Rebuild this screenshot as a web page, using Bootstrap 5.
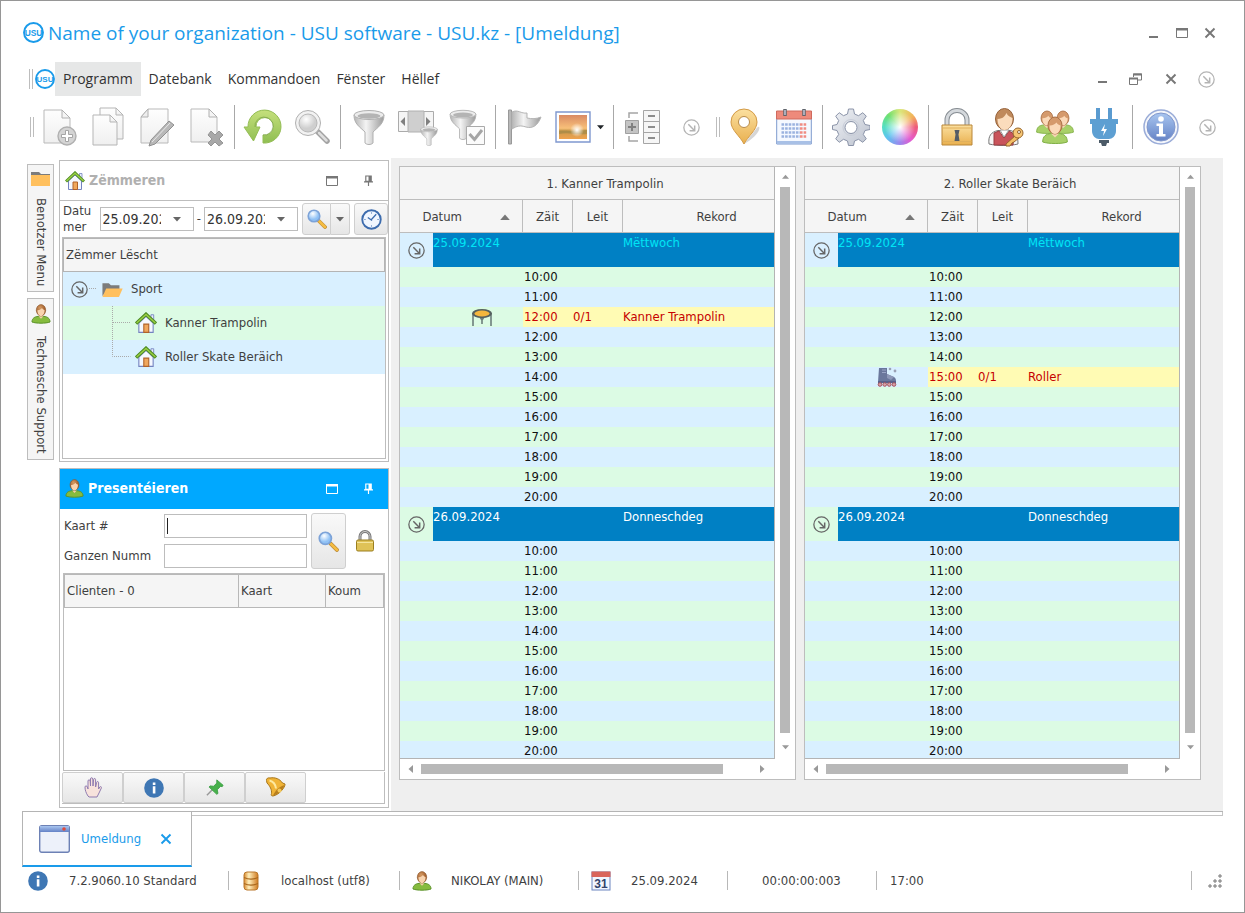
<!DOCTYPE html>
<html lang="lb">
<head>
<meta charset="utf-8">
<meta name="viewport" content="width=device-width, initial-scale=1">
<title>USU software - Umeldung</title>
<link href="https://cdn.jsdelivr.net/npm/bootstrap@5.3.0/dist/css/bootstrap.min.css" rel="stylesheet">
<style>
:root{--line:#bdbdbd;--blue:#00a8ff;--ink:#3f3f3f;--rowb:#d9f0ff;--rowg:#dcfbe4}
body{font-family:"DejaVu Sans Condensed","Open Sans",sans-serif;font-size:13px;line-height:20px;color:var(--ink);background:#fff}
button{font:inherit;color:inherit}
svg{display:block;flex:none}
.app{border:1px solid #969696;min-height:100vh}
.plain{background:none;border:0;padding:0;display:flex;align-items:center;justify-content:center;color:#666}
.titlebar{height:61px;padding:2px 20px 0 22px}
.titlebar h1{font-family:"Open Sans","Noto Sans",sans-serif;font-size:19px;line-height:28px;color:#1a9bea;font-weight:400}
.win{width:28px;height:28px;color:#777}
.menubar{height:34px;padding:0 21px 0 28px;font-family:"Open Sans","Noto Sans",sans-serif;font-size:14px}
.menubar .menu-item{color:#333;text-decoration:none;padding:7px 8px;line-height:20px}
.menubar .menu-item.active{background:#e6e7e7}
.grip{width:4px;height:20px;border:solid #bdbdbd;border-width:0 1px;flex:none}
.menubar .grip{margin-right:2px}
.toolbar{height:62px;padding:0 24px 0 29px}
.tool{width:49px;height:44px}
.vsep{width:1px;height:44px;background:#a8a8a8;margin:0 3px 0 4px;flex:none}
.more{width:26px;height:26px;color:#b4b4b4}
.more.mid{margin:0 12px}
.main{padding:0 21px}
.side{width:37px;padding:6px 5px 0;gap:6px}
.side button{width:27px;border:1px solid var(--line);background:#f5f5f5;padding:5px 2px;display:flex;flex-direction:column;align-items:center;gap:12px}
.side span{writing-mode:vertical-rl;line-height:20px;white-space:nowrap}
.dock{width:330px;gap:6px;padding:2px 0 3px}
.panel{border:1px solid var(--line);background:#fff}
.panel-head{height:40px;padding:0 2px 0 5px;border-bottom:1px solid var(--line);color:#b0b0b0}
.panel-head h2{font-family:"DejaVu Sans Condensed","DejaVu Sans",sans-serif;font-size:14px;font-weight:700}
.panel-head .plain{width:36px;height:28px;color:#777}
.panel-head.on{background:var(--blue);border-color:var(--blue);color:#fff}
.panel-head.on .plain{color:#fff}
.entry{grid-template-columns:100px 143px;row-gap:6px}
.entry label{line-height:24px}
.field{border:1px solid var(--line);height:24px;min-width:0;color:#222;background:#fff;border-radius:0;padding:0 4px;outline:0}
.field.caret{background:linear-gradient(#222,#222) 2px 3px/1px 16px no-repeat #fff}
.datebox{width:94px;border:1px solid var(--line);height:24px}
.datebox input{border:0;width:60px;padding:0 0 0 2px;font-size:14px;color:#333;outline:0}
.datebox button{width:32px}
.soft{border:1px solid #cfcfcf;border-radius:3px;background:linear-gradient(#f9f9f9,#e6e6e6);padding:0;display:flex;align-items:center;justify-content:center;color:#666}
.filter{height:36px;padding:0 0 0 3px}
.filter label{width:42px;line-height:16px}
.filter .dash{width:12px;text-align:center}
.treebox{border:1px solid var(--line);margin:0 2px 2px;min-height:222px}
.listhead{background:#f5f5f5;border:1px solid #b4b4b4;line-height:32px;padding:0 2px}
.tree li{height:34px}
.tree li:nth-child(odd){background:var(--rowb)}
.tree li:nth-child(even){background:var(--rowg)}
.inset{margin:0 3px;border:1px solid var(--line)}
.clients th{background:#f5f5f5;border:1px solid #b8b8b8;font-weight:400;line-height:32px;padding:0 2px}
.clients{table-layout:fixed;width:100%}
.cmds{margin:1px 3px 3px 2px;border:solid var(--line);border-width:0 1px 1px 0}
.cmd{width:61px;height:31px;border-radius:2px}
.work{background:#efefef;margin-left:2px;padding:8px 22px 30px 8px;gap:8px}
.frame{flex:1 1 0;min-width:0;border:1px solid var(--line);background:#fff}
.view{height:592px;min-width:0;overflow:hidden;border-right:1px solid #b4b4b4;border-bottom:1px solid #b4b4b4}
.sched{table-layout:fixed;width:100%;border-collapse:separate;border-spacing:0;color:#111}
.sched th{background:#f5f5f5;color:var(--ink);font-weight:400;height:33px;padding:1px 0 0;text-align:center;border:solid #bdbdbd;border-width:0 1px 1px 0}
.sched th:last-child{border-right:0}
.sched .wide{padding-left:36px}
.sched .sort{margin-left:22px;color:#777}
.sched td{height:20px;line-height:20px;padding:0}
.sched tbody tr:nth-child(odd){background:var(--rowb)}
.sched tbody tr:nth-child(even){background:var(--rowg)}
.sched td:nth-child(3){padding-left:1px}
.sched tr.day td{height:34px;vertical-align:top;background:#0080c4;color:#fff;padding:0}
.sched tr.day.now td{color:#00e5f5}
.sched tr.day td.tog{background:inherit;vertical-align:middle}
.sched tr.booked td.hit{background:#fffbb4;color:#c60000}
.vbar{width:20px;flex:none;padding:7px 0 9px;color:#999}
.vbar i,.hbar i{background:#b8b8b8}
.vbar i{width:10px;margin-bottom:4px}
.hbar{height:20px;padding:0 30px 0 8px;color:#999}
.hbar i{height:10px;flex:0 1 302px}
.foot{margin:0 21px;border-top:1px solid #b4b4b4}
.rail{border:solid #c4c4c4;border-width:0 1px 1px 0;height:4px;flex:1}
.doc{width:170px;height:55px;border:solid #b4b4b4;border-width:0 1px 0 1px;border-bottom:2px solid #1a9bea;color:#1a9bea;padding-left:16px;gap:11px}
.doc .plain{color:#1a9bea}
.status{height:45px;padding:0 22px 18px 27px}
.status .vs{width:1px;height:19px;background:#b8b8b8}
</style>
</head>
<body>
<svg width="0" height="0" class="position-absolute" aria-hidden="true">
<defs>
<linearGradient id="gMetal" x1="0" x2="1"><stop offset="0" stop-color="#b5b5b5"/><stop offset=".4" stop-color="#f4f4f4"/><stop offset="1" stop-color="#9a9a9a"/></linearGradient>
<linearGradient id="gPage" x2="0" y2="1"><stop offset="0" stop-color="#fefefe"/><stop offset="1" stop-color="#efefef"/></linearGradient>
<linearGradient id="gGreen" x2="0" y2="1"><stop offset="0" stop-color="#c5e07c"/><stop offset="1" stop-color="#8fbe52"/></linearGradient>
<linearGradient id="gGold" x2="0" y2="1"><stop offset="0" stop-color="#fbe0a0"/><stop offset="1" stop-color="#e9b04f"/></linearGradient>
<linearGradient id="gDb" x2="1"><stop offset="0" stop-color="#d98a2e"/><stop offset=".35" stop-color="#fff0bd"/><stop offset="1" stop-color="#d07a1f"/></linearGradient>
<linearGradient id="gSun" x2="0" y2="1"><stop offset="0" stop-color="#d98a64"/><stop offset=".55" stop-color="#f8c079"/><stop offset=".65" stop-color="#c99a4e"/><stop offset="1" stop-color="#efa24e"/></linearGradient>
<linearGradient id="gBlue" x2="0" y2="1"><stop offset="0" stop-color="#a9c6f0"/><stop offset="1" stop-color="#6482c6"/></linearGradient>
<linearGradient id="gGear" x2="1" y2="1"><stop offset="0" stop-color="#f0f2f6"/><stop offset="1" stop-color="#bcc2ce"/></linearGradient>
<radialGradient id="gLens" cx=".4" cy=".3"><stop offset="0" stop-color="#fff"/><stop offset="1" stop-color="#cfcfcf"/></radialGradient>
<radialGradient id="gLensB" cx=".4" cy=".3"><stop offset="0" stop-color="#fff"/><stop offset="1" stop-color="#8fc1f5"/></radialGradient>
<radialGradient id="gHair" cx=".4" cy=".3"><stop offset="0" stop-color="#d59a63"/><stop offset="1" stop-color="#a5622f"/></radialGradient>
<radialGradient id="gGlow"><stop offset="0" stop-color="#fff"/><stop offset="1" stop-color="#fff" stop-opacity="0"/></radialGradient>
</defs>
<symbol id="sheet" viewBox="0 0 36 36"><path d="M3 2h18l8 8v25H3z" fill="url(#gPage)" stroke="#b9b9b9"/><path d="M21 2v8h8z" fill="#f5f5f5" stroke="#b0b0b0"/></symbol>
<symbol id="more" viewBox="0 0 16 16"><circle cx="8" cy="8" r="7.2" fill="none" stroke="currentColor" stroke-width="1.2"/><path d="M5 5l5.500 5.500M11 6.200V11H6.200" fill="none" stroke="currentColor" stroke-width="1.400"/></symbol>
<symbol id="funnel" viewBox="0 0 32 36"><path d="M1 6c0 9 6 12 11 17v11c2 2 6 2 8 0V23c5-5 11-8 11-17z" fill="url(#gMetal)" stroke="#b0b0b0"/><ellipse cx="16" cy="6" rx="15" ry="4.500" fill="#ececec" stroke="#b0b0b0"/><ellipse cx="16" cy="7" rx="11.500" ry="2.800" fill="#b4b4b4"/></symbol>
<symbol id="glassB" viewBox="0 0 20 20"><path d="M12 12l6 6" stroke="#b98a3a" stroke-width="3.800" stroke-linecap="round"/><path d="M12.500 12.500L18 18" stroke="#f5bc42" stroke-width="2.600" stroke-linecap="round"/><circle cx="7" cy="7" r="5.800" fill="url(#gLensB)" stroke="#7da3d8" stroke-width="1.600"/></symbol>
<symbol id="house" viewBox="0 0 20 20"><path d="M14.500 2.500h2.500v5h-2.500z" fill="#e9eefb" stroke="#7483c0" stroke-width=".8"/><path d="M3.500 10L10 4l6.500 6v8.500h-13z" fill="#f5f8ff" stroke="#7483c0"/><path d="M1 10.500L10 2l9 8.500" fill="none" stroke="#4c8a21" stroke-width="3"/><path d="M1.500 10L10 2.200l8.500 7.800" fill="none" stroke="#9bcf46" stroke-width="1.300"/><path d="M8 11h4.500v7.500H8z" fill="#f0a75d" stroke="#b0622a"/></symbol>
<symbol id="person" viewBox="0 0 20 20"><path d="M1 18c0-4 3-5.300 6-5.600h6c3 .3 6 1.600 6 5.600-4 1.600-14 1.600-18 0z" fill="#86bb3e" stroke="#5b9228"/><path d="M7.500 12.200l2.500 2.500 2.500-2.500z" fill="#f3cda6"/><ellipse cx="10" cy="6.200" rx="4.700" ry="5.600" fill="url(#gHair)" stroke="#8a5226" stroke-width=".6"/><path d="M6.400 6.200c2 .2 3.600-1 4.600-2.200.6 1.200 1.500 1.600 2.600 2 0 3.600-1.700 6-3.600 6s-3.600-2.400-3.600-5.800z" fill="#f8d3ae"/></symbol>
<symbol id="member" viewBox="0 0 26 28"><path d="M.7 26c0-6 3.500-8 8-8.500h8.600c4.500.5 8 2.500 8 8.500-5 2-19 2-24.600 0z" fill="#a8d068" stroke="#7fae45"/><path d="M9 17.500l4 4 4-4z" fill="#f6d5b3"/><ellipse cx="13" cy="9.500" rx="7" ry="8.500" fill="#d59a6c" stroke="#a86d42"/><path d="M7.500 9.500c3 .2 6-1.500 7-3 1 1.800 2.500 2.500 4 3 0 5-2.500 8.500-5.500 8.500s-5.500-3.500-5.500-8.500z" fill="#fbd9b8"/></symbol>
<symbol id="info" viewBox="0 0 20 20"><circle cx="10" cy="10" r="9.800" fill="#3f77b4"/><path d="M8.800 4.500h2.600v2.400H8.800zM8.800 8.300h2.600v7.200H8.800z" fill="#fff"/></symbol>
<symbol id="folder" viewBox="0 0 20 16"><path d="M1 14V2h6l2 2h8v4H6z" fill="#7c7c7c"/><path d="M4.500 7H20l-3.500 8H1z" fill="#ffc05e"/></symbol>
<symbol id="box" viewBox="0 0 12 10"><path d="M.5.500h11v9H.5z" fill="none" stroke="currentColor"/><path d="M0 0h12v2.500H0z" fill="currentColor"/></symbol>
<symbol id="tack" viewBox="0 0 10 12"><path d="M2 1h6v6H2zM0 7.500h10M5 7v5" fill="none" stroke="currentColor" stroke-width="1.300"/><path d="M5 1h3v6H5z" fill="currentColor"/></symbol>
<symbol id="cross" viewBox="0 0 12 12"><path d="M1.500 1.500l9 9M10.500 1.500l-9 9" stroke="currentColor" stroke-width="1.900"/></symbol>
<symbol id="down" viewBox="0 0 8 5"><path d="M0 0h8L4 4.500z" fill="currentColor"/></symbol>
<symbol id="up" viewBox="0 0 8 5"><path d="M0 5h8L4 .5z" fill="currentColor"/></symbol>
<symbol id="left" viewBox="0 0 5 8"><path d="M5 0v8L.5 4z" fill="currentColor"/></symbol>
<symbol id="right" viewBox="0 0 5 8"><path d="M0 0v8l4.500-4z" fill="currentColor"/></symbol>
<symbol id="tramp" viewBox="0 0 22 18"><path d="M2 5v13M20 5v13M11 9v7M9 9l2 3 2-3" stroke="#6d7f7c" stroke-width="1.600" fill="none"/><ellipse cx="11" cy="5.500" rx="10" ry="4.500" fill="#55605e"/><ellipse cx="11" cy="5.500" rx="7.500" ry="3" fill="#f4b63e"/></symbol>
<symbol id="skate" viewBox="0 0 20 20"><path d="M2 1h8v6l7 3c2 1 2 3 2 5H1z" fill="#6a779c"/><path d="M10 7l7 3-3 3-4-2z" fill="#8e98b8"/><path d="M9 3H5M9 5.500H5" stroke="#9aa5c6"/><circle cx="13" cy="2" r="1.300" fill="#9aa1b5"/><circle cx="18" cy="4" r="1.400" fill="#9aa1b5"/><path d="M1 14h18v2H1z" fill="#59608a"/><g fill="#d9a3a8" stroke="#a4525e"><circle cx="3" cy="17.500" r="1.800"/><circle cx="7.700" cy="17.500" r="1.800"/><circle cx="12.300" cy="17.500" r="1.800"/><circle cx="17" cy="17.500" r="1.800"/></g></symbol>
</svg>

<div class="app d-flex flex-column">
  <header class="titlebar d-flex align-items-center">
    <svg width="21" height="21" viewBox="0 0 20 20"><circle cx="10" cy="10" r="9" fill="#fff" stroke="#1a9bea" stroke-width="1.900"/><text x="10" y="13" text-anchor="middle" font-family="Liberation Sans" font-weight="700" font-size="8" fill="#1a9bea">USU</text></svg>
    <h1 class="m-0 ms-1 flex-grow-1 text-truncate">Name of your organization - USU software - USU.kz - [Umeldung]</h1>
    <button class="plain win" aria-label="Minimize"><svg width="10" height="10"><path d="M0 8h9v2H0z" fill="currentColor"/></svg></button>
    <button class="plain win" aria-label="Maximize"><svg width="12" height="10"><use href="#box"/></svg></button>
    <button class="plain win" aria-label="Close"><svg width="12" height="12"><use href="#cross"/></svg></button>
  </header>

  <nav class="menubar d-flex align-items-center">
    <span class="grip"></span>
    <svg width="20" height="20" viewBox="0 0 20 20"><circle cx="10" cy="10" r="9" fill="#fff" stroke="#1a9bea" stroke-width="1.900"/><text x="10" y="13" text-anchor="middle" font-family="Liberation Sans" font-weight="700" font-size="8" fill="#1a9bea">USU</text></svg>
    <a class="menu-item active" href="#">Programm</a>
    <a class="menu-item" href="#">Datebank</a>
    <a class="menu-item" href="#">Kommandoen</a>
    <a class="menu-item" href="#">Fënster</a>
    <a class="menu-item me-auto" href="#">Hëllef</a>
    <button class="plain win me-1" aria-label="Minimize window"><svg width="10" height="10"><path d="M0 7h9v2H0z" fill="currentColor"/></svg></button>
    <button class="plain win me-2" aria-label="Restore window"><svg width="13" height="12" fill="none" stroke="currentColor"><path d="M4.500 4V1h8v6H9M.5 5.500h8v6h-8z"/><path d="M4 1.500h9M0 5.500h9" stroke-width="2"/></svg></button>
    <button class="plain win me-2" aria-label="Close window"><svg width="12" height="12"><use href="#cross"/></svg></button>
    <button class="plain more me-1" aria-label="More"><svg width="17" height="17"><use href="#more"/></svg></button>
  </nav>

  <div class="toolbar d-flex align-items-center">
    <span class="grip"></span>
    <button class="plain tool" aria-label="Add"><svg width="36" height="38" viewBox="0 0 36 38"><use href="#sheet" width="36" height="36"/><circle cx="26" cy="28" r="9" fill="#d4d4d4" stroke="#b0b0b0" stroke-width="1.400"/><path d="M24.500 22.500h3v4h4v3h-4v4h-3v-4h-4v-3h4z" fill="#fff" stroke="#a5a5a5"/></svg></button>
    <button class="plain tool" aria-label="Copy"><svg width="36" height="40" viewBox="0 0 36 40"><g fill="url(#gPage)" stroke="#b5b5b5"><path d="M10 1h16l7 7v24H10z"/><path d="M26 1v7h7z"/><path d="M3 8h17l7 7v23H3z"/><path d="M20 8v7h7z"/></g></svg></button>
    <button class="plain tool" aria-label="Edit"><svg width="38" height="40" viewBox="0 0 38 40"><path d="M10 2h20v34H3V10z" fill="url(#gPage)" stroke="#b9b9b9"/><path d="M10 2v8H3z" fill="#eee" stroke="#b0b0b0"/><path d="M31 14l5 4-19 19-6 2 2-6z" fill="#b8b8b8" stroke="#909090"/><path d="M32 16L14 35" stroke="#e8e8e8"/></svg></button>
    <button class="plain tool" aria-label="Delete"><svg width="36" height="40" viewBox="0 0 36 40"><use href="#sheet" width="36" height="36"/><path d="M20 28l3-4 4 4 4-4 4 4-4 4 4 4-4 3-4-4-4 4-3-3 4-4z" fill="#a8a8a8" stroke="#959595"/></svg></button>
    <span class="vsep"></span>
    <button class="plain tool" aria-label="Refresh"><svg width="40" height="38" viewBox="0 0 40 38"><path d="M5 19a16.500 16.500 0 1 1 15 16v-8a8.800 8.800 0 1 0-7-8h4l-6.500 14L1 19z" fill="url(#gGreen)" stroke="#94bd55"/><path d="M20 27a9 9 0 1 0-8-8" fill="none" stroke="#6b9438" stroke-opacity=".5"/></svg></button>
    <button class="plain tool" aria-label="Search"><svg width="36" height="36" viewBox="0 0 36 36"><path d="M22 21l11 11" stroke="#a3a3a3" stroke-width="5.500" stroke-linecap="round"/><path d="M25 24l7.500 7.500" stroke="#dedede" stroke-width="2.500" stroke-linecap="round"/><circle cx="14" cy="14" r="12.500" fill="#f2f2f2" stroke="#b0b0b0"/><circle cx="14" cy="14" r="9" fill="url(#gLens)" stroke="#b8b8b8"/></svg></button>
    <span class="vsep"></span>
    <button class="plain tool" aria-label="Filter"><svg width="32" height="36"><use href="#funnel"/></svg></button>
    <button class="plain tool" aria-label="Column filter"><svg width="40" height="38" viewBox="0 0 40 38"><path d="M.5 3.500h35v20H.5z" fill="#f5f5f5" stroke="#ababab"/><path d="M10 3h16v21H10z" fill="#cfcfcf" stroke="#b0b0b0"/><path d="M7 9v9l-4.500-4.500zM28 9v9l4.500-4.500z" fill="#808080"/><use href="#funnel" x="22" y="18" width="18" height="20"/></svg></button>
    <button class="plain tool" aria-label="Filter settings"><svg width="36" height="38" viewBox="0 0 36 38"><use href="#funnel" x="0" y="1" width="28" height="31"/><path d="M17.500 18.500h18v18h-18z" fill="#fbfbfb" stroke="#aaa"/><path d="M20.500 26l5 5.500 7.500-9.500" fill="none" stroke="#a5a5a5" stroke-width="3"/></svg></button>
    <span class="vsep"></span>
    <button class="plain tool" aria-label="Flag"><svg width="36" height="38" viewBox="0 0 36 38"><path d="M2.500 2h3v34h-3z" fill="#b8b8b8" stroke="#999"/><path d="M6 4c6-3 9 2 15 1v5c5 1 9 1 14-1-3 8-8 12-15 10-6-2-9-1-14 2z" fill="url(#gMetal)" stroke="#b5b5b5"/></svg></button>
    <button class="plain tool" aria-label="Picture"><svg width="36" height="32" viewBox="0 0 36 32"><path d="M1 1h34v30H1z" fill="#fff" stroke="#7f98cf" stroke-width="1.400"/><path d="M4 4h28v24H4z" fill="url(#gSun)"/><path d="M4 20c7-1 8 1 28-1v4c-12 1-18-2-28 0z" fill="#9a8445" opacity=".6"/><circle cx="22" cy="19" r="7" fill="url(#gGlow)"/></svg></button>
    <button class="plain text-dark" aria-label="Picture options"><svg width="12" height="5" viewBox="0 0 12 5"><use href="#down" width="7" height="5"/></svg></button>
    <span class="vsep"></span>
    <button class="plain tool" aria-label="Expand"><svg width="36" height="36" viewBox="0 0 36 36" fill="none" stroke="#a5a5a5"><path d="M5 9V4h9M5 27v5h9" stroke-width="1.500"/><path d="M1.500 11.500h13v13h-13z" fill="#c4c4c4" stroke="#a0a0a0"/><path d="M8 14v8M4 18h8" stroke="#808080" stroke-width="2"/><path d="M19.500 1.500h16v33h-16zM19.500 12.500h16M19.500 23.500h16" fill="#f6f6f6"/><path d="M24 7h7M24 18h7M24 29h7" stroke="#8c8c8c" stroke-width="2"/></svg></button>
    <button class="plain more mid" aria-label="More tools"><svg width="17" height="17"><use href="#more"/></svg></button>
    <span class="grip"></span>
    <button class="plain tool" aria-label="Map"><svg width="36" height="38" viewBox="0 0 36 38"><path d="M17 36l12-15c3-4 4-2 3 1s-7 10-15 14z" fill="#999" opacity=".4"/><path d="M17 36C13 28 4 22 4 14a13 13 0 0 1 26 0c0 8-9 14-13 22z" fill="url(#gGold)" stroke="#d39a45"/><circle cx="17" cy="14" r="5.500" fill="#fff" stroke="#b98c4a"/></svg></button>
    <button class="plain tool" aria-label="Calendar"><svg width="36" height="38" viewBox="0 0 36 38"><path d="M.7 4h34.600v32H.7z" fill="#f5f9ff" stroke="#7d9ace"/><path d="M.5 3h35v8H.5z" fill="#ee8a7b" stroke="#cf6a5e"/><path d="M1 33h34v3H1z" fill="#a8c0e6"/><path d="M9 1v7M28 1v7" stroke="#60656d" stroke-width="3.500"/><path d="M9 2v5M28 2v5" stroke="#dde" stroke-width="1.200"/><g stroke-width="2.600" stroke-dasharray="2.600 1"><path d="M5.500 16.500H24M5.500 20.500H24M5.500 24.500H24M5.500 28.500H24" stroke="#9ab2df"/><path d="M24 16.500h7M24 20.500h7M24 24.500h7M24 28.500h7" stroke="#f08b82"/></g></svg></button>
    <span class="vsep"></span>
    <button class="plain tool" aria-label="Settings"><svg width="38" height="38" viewBox="0 0 38 38"><path d="M16.500 1h5l1 5 4 1.700 4.300-3 3.500 3.500-3 4.300L33 16.500l5 1v4l-5 1-1.700 4 3 4.300-3.500 3.500-4.300-3-4 1.700-1 4.500h-5l-1-4.500-4-1.700-4.300 3-3.500-3.500 3-4.300L5 22.500l-4.500-1v-4l4.500-1 1.700-4-3-4.300 3.500-3.500 4.300 3 4-1.700z" fill="url(#gGear)" stroke="#8a93a8"/><circle cx="19" cy="19.500" r="6" fill="#fff" stroke="#8a93a8"/><circle cx="19" cy="19.500" r="8" fill="none" stroke="#c8cdd8"/></svg></button>
    <button class="plain tool" aria-label="Colours"><span class="rounded-circle d-block" style="width:36px;height:36px;background:radial-gradient(circle,#fff 0,#fff0 60%),conic-gradient(#d9e77a,#f2b45a 50deg,#ee5b7a 90deg,#e45bd0 140deg,#9d86ee 180deg,#5dc3ef 230deg,#55dfc4 270deg,#6fe070 315deg,#d9e77a)"></span></button>
    <span class="vsep"></span>
    <button class="plain tool" aria-label="Lock"><svg width="32" height="38" viewBox="0 0 32 38"><path d="M6 18v-6a10 9.500 0 0 1 20 0v6" fill="none" stroke="#858b91" stroke-width="5"/><path d="M6 18v-6a10 9.500 0 0 1 20 0v6" fill="none" stroke="#d4d8dc" stroke-width="3"/><path d="M1 17h30v20H1z" fill="url(#gGold)" stroke="#b98638"/><path d="M1.500 20h29M1.500 33.500h29" stroke="#e0b05c"/><path d="M13.500 22h5l-1 4.500 1 6.500h-5l1-6.500z" fill="#555c66"/></svg></button>
    <button class="plain tool" aria-label="User rights"><svg width="36" height="40" viewBox="0 0 36 40"><path d="M1 37c-1-8 2-12 9-13.500h12c6 1 8 5 8 13.500-8 2-20 2-29 0z" fill="#f5f5f5" stroke="#777"/><path d="M6 26l5-2 5 7 5-7 5 3-1 11H6z" fill="#c9545b" stroke="#9c3f45"/><path d="M12 23l4 7 5-7z" fill="#fff" stroke="#999"/><ellipse cx="16.500" cy="12" rx="9" ry="10.500" fill="#c08a5c" stroke="#96623a"/><path d="M9.500 12c6 0 8-4 9-6 1 3 4 4 6 5 0 8-4 12-8 12s-7-5-7-11z" fill="#fbdcbc"/><path d="M28 28L18 37v2h4l2-3 2-1 5-4z" fill="#f3bd66" stroke="#96642a"/><circle cx="30" cy="26" r="5" fill="#f6c674" stroke="#96642a"/><circle cx="31" cy="25" r="1.500" fill="#fff" stroke="#96642a"/></svg></button>
    <button class="plain tool" aria-label="Users"><svg width="38" height="36" viewBox="0 0 38 36"><use href="#member" x="0" y="1" width="22" height="24"/><use href="#member" x="16" y="1" width="22" height="24"/><use href="#member" x="6" y="7" width="26" height="28"/></svg></button>
    <button class="plain tool" aria-label="Connection"><svg width="28" height="40" viewBox="0 0 28 40"><path d="M6 1h4v12H6zM18 1h4v12h-4z" fill="#5a9bd0"/><path d="M0 12h28v5h-2v7c0 5-4 8-7 8H9c-3 0-7-3-7-8v-7H0z" fill="#5d9fd2"/><path d="M15 17l-4 7h3l-1 5 4-7h-3z" fill="#fff"/><path d="M9 33h10v3h-2l-1 3h-4l-1-3H9z" fill="#4c5b68"/></svg></button>
    <span class="vsep"></span>
    <button class="plain tool" aria-label="About"><svg width="36" height="36" viewBox="0 0 36 36"><circle cx="18" cy="18" r="17" fill="#f4f6fb" stroke="#9aacd8" stroke-width="1.500"/><circle cx="18" cy="18" r="14" fill="url(#gBlue)" stroke="#8298cc"/><circle cx="18" cy="10" r="2.800" fill="#fff"/><path d="M13.500 14.500h6.500V25h2.500v2.500h-9V25H16v-8h-2.500z" fill="#fff"/></svg></button>
    <button class="plain more ms-auto" aria-label="More"><svg width="17" height="17"><use href="#more"/></svg></button>
  </div>

  <main class="main d-flex flex-grow-1">
    <nav class="side d-flex flex-column">
      <button><svg width="19" height="16" viewBox="0 0 19 16"><path d="M0 2h8l2 2h9v3H0z" fill="#7c7c7c"/><path d="M0 5h19v11H0z" fill="#ffc05e"/></svg><span>Benotzer Menu</span></button>
      <button><svg width="20" height="20"><use href="#person"/></svg><span>Technesche Support</span></button>
    </nav>
    <aside class="dock d-flex flex-column flex-shrink-0">
      <section class="panel">
        <div class="panel-head d-flex align-items-center">
          <svg width="20" height="20"><use href="#house"/></svg>
          <h2 class="m-0 ms-1 flex-grow-1">Zëmmeren</h2>
          <button class="plain" aria-label="Maximize panel"><svg width="12" height="10"><use href="#box"/></svg></button>
          <button class="plain" aria-label="Pin panel"><svg width="9" height="11"><use href="#tack"/></svg></button>
        </div>
        <form class="filter d-flex align-items-center overflow-hidden">
          <label for="d1">Datu<br>mer</label>
          <div class="datebox d-flex flex-shrink-0"><input id="d1" value="25.09.2024"><button type="button" class="plain" aria-label="Open start date"><svg width="8" height="5"><use href="#down"/></svg></button></div>
          <label for="d2" class="dash">-</label>
          <div class="datebox d-flex flex-shrink-0"><input id="d2" value="26.09.2024"><button type="button" class="plain" aria-label="Open end date"><svg width="8" height="5"><use href="#down"/></svg></button></div>
          <div class="btn-group flex-shrink-0 ms-1">
            <button type="button" class="soft rounded-end-0" aria-label="Find" style="width:29px;height:32px"><svg width="20" height="20"><use href="#glassB"/></svg></button>
            <button type="button" class="soft rounded-start-0 border-start-0" aria-label="Find options" style="width:19px"><svg width="8" height="5"><use href="#down"/></svg></button>
          </div>
          <button type="button" class="soft flex-shrink-0 ms-1" aria-label="Now" style="width:34px;height:32px"><svg width="21" height="21" viewBox="0 0 20 20"><circle cx="10" cy="10" r="8.800" fill="#f0f6ff" stroke="#3d6cae" stroke-width="1.800"/><path d="M10 3v1.500M10 15.500V17M3 10h1.500M15.500 10H17" stroke="#7c9cca"/><path d="M14.500 5L9.500 10.500M6.500 8l4 3" stroke="#3d6cae" stroke-width="1.200"/></svg></button>
        </form>
        <div class="treebox">
          <div class="listhead">Zëmmer Lëscht</div>
          <ul class="tree list-unstyled m-0">
            <li class="d-flex align-items-center ps-2"><svg width="17" height="17" color="#666"><use href="#more"/></svg><svg width="9" height="2"><path d="M1 .5h8" stroke="#aaa" stroke-dasharray="1 1"/></svg><svg class="ms-1" width="22" height="17" ><use href="#folder"/></svg><span class="ms-2">Sport</span></li>
            <li class="d-flex align-items-center ps-5"><svg width="24" height="34"><path d="M1.500 0v34M2 16.500h18" stroke="#aaa" stroke-dasharray="1 1"/></svg><svg width="22" height="22"><use href="#house"/></svg><span class="ms-2">Kanner Trampolin</span></li>
            <li class="d-flex align-items-center ps-5"><svg width="24" height="34"><path d="M1.500 0v16.500h18" stroke="#aaa" stroke-dasharray="1 1" fill="none"/></svg><svg width="22" height="22"><use href="#house"/></svg><span class="ms-2">Roller Skate Beräich</span></li>
          </ul>
        </div>
      </section>
      <section class="panel flex-grow-1 d-flex flex-column">
        <div class="panel-head on d-flex align-items-center">
          <svg width="19" height="19"><use href="#person"/></svg>
          <h2 class="m-0 ms-1 flex-grow-1">Presentéieren</h2>
          <button class="plain" aria-label="Maximize panel"><svg width="12" height="10"><use href="#box"/></svg></button>
          <button class="plain" aria-label="Pin panel"><svg width="9" height="11"><use href="#tack"/></svg></button>
        </div>
        <form class="d-flex align-items-center px-1 py-1">
          <div class="entry d-grid">
            <label for="card">Kaart #</label><input id="card" class="field caret">
            <label for="num">Ganzen Numm</label><input id="num" class="field">
          </div>
          <button type="button" class="soft ms-1" aria-label="Search client" style="width:35px;height:56px"><svg width="21" height="21"><use href="#glassB"/></svg></button>
          <button type="button" class="plain mx-auto" aria-label="Unlock"><svg width="20" height="22" viewBox="0 0 20 22"><path d="M5 11V6.500a5 5 0 0 1 10 0V11" fill="none" stroke="#777" stroke-width="3"/><path d="M5 11V6.500a5 5 0 0 1 10 0V11" fill="none" stroke="#ccc"/><rect x="1.500" y="10" width="17" height="11" rx="1.500" fill="#dfc257" stroke="#9b7f1f"/><path d="M2 12.500h16" stroke="#f4e49d"/></svg></button>
        </form>
        <div class="inset flex-grow-1">
          <table class="clients"><colgroup><col style="width:174px"><col style="width:87px"><col></colgroup><thead><tr><th>Clienten - 0</th><th>Kaart</th><th>Koum</th></tr></thead></table>
        </div>
        <div class="cmds d-flex">
          <button class="soft cmd" aria-label="Hand"><svg width="18" height="21" viewBox="0 0 18 21"><path d="M4 19c-2-3-3-6-3-9 0-1.500 2-1.500 2.300 0l.7 2V4c0-1.600 2-1.600 2.200 0l.3 5V2c0-1.700 2.200-1.700 2.300 0l.2 7 .6-6.500c.2-1.500 2-1.300 2 .2V10l1-4.500c.3-1.500 2-1.200 2 .2V12l1.200-2c1-1 2 0 1.500 1.200L15 16l-2 4H5z" fill="#f7e2dc" stroke="#8f7bb0"/></svg></button>
          <button class="soft cmd" aria-label="Info"><svg width="20" height="20"><use href="#info"/></svg></button>
          <button class="soft cmd" aria-label="Pin"><svg width="18" height="18" viewBox="0 0 20 20"><path d="M7 12L1 18" stroke="#999" stroke-width="1.600"/><path d="M12 1l7 6-1 1.500-2-.3-3.500 3.800.8 4-1.300 1L3.500 9l1-1.300 4 .4L12 4.500z" fill="#47b04b" stroke="#3c9f45"/></svg></button>
          <button class="soft cmd" aria-label="Bell"><svg width="21" height="21" viewBox="0 0 21 21"><path d="M1.500 3.500C1 1.500 3 .5 5 1c5-1 10 1 12.500 5l2.500 1c.5 3-6 11-12 12-2 0-2-1-1.500-2.500C7 13 5 9 2 6z" fill="#f0b437" stroke="#a8761a"/><path d="M19.500 8C18 13 13 17.500 8 18.500 10 14 14 9.500 19.500 8z" fill="#b87f1e"/><path d="M4.500 3.500c4 1 6 4 6.500 8" stroke="#fde9a0" stroke-width="2" fill="none"/><circle cx="14.500" cy="13.500" r="2" fill="#f4c95a"/></svg></button>
        </div>
      </section>
    </aside>

    <div class="work d-flex flex-grow-1 align-items-start" id="work"></div>
  </main>

  <div class="foot d-flex align-items-start">
    <div class="doc d-flex align-items-center">
      <svg width="31" height="28" viewBox="0 0 31 28"><rect x=".7" y=".7" width="29.600" height="26.600" rx="2" fill="#edf1fa" stroke="#6d81b5" stroke-width="1.400"/><path d="M1 1h29v6H1z" fill="url(#gBlue)"/><circle cx="25" cy="4" r="1.800" fill="#e04a3a"/></svg>
      <a href="#" class="text-reset text-decoration-none">Umeldung</a>
      <button class="plain ms-2" aria-label="Close tab"><svg width="12" height="12"><use href="#cross"/></svg></button>
    </div>
    <div class="rail"></div>
  </div>

  <footer class="status d-flex align-items-center">
    <svg width="20" height="20"><use href="#info"/></svg><span style="width:162px;padding-left:21px">7.2.9060.10 Standard</span>
    <span class="vs" style="margin:0 14px 0 18px"></span>
    <svg width="16" height="20" viewBox="0 0 16 20"><rect x="1" y="1" width="14" height="18" rx="3" fill="url(#gDb)" stroke="#b9772a"/><path d="M1 6.500c4 1.800 10 1.800 14 0M1 12.500c4 1.800 10 1.800 14 0" stroke="#a9681e" fill="none" stroke-width="1.200"/></svg>
    <span style="width:140px;padding-left:22px">localhost (utf8)</span>
    <span class="vs me-2"></span>
    <svg class="ms-1" width="20" height="20"><use href="#person"/></svg><span style="width:146px;padding-left:19px">NIKOLAY (MAIN)</span>
    <span class="vs me-2"></span>
    <svg class="ms-1" width="20" height="20" viewBox="0 0 20 20"><rect x="1" y="1" width="18" height="18" fill="#f2f6ff" stroke="#6d86c0"/><path d="M.5.500h19V6H.5z" fill="#d9655c"/><text x="10" y="16.500" text-anchor="middle" font-family="Liberation Sans" font-weight="700" font-size="12" fill="#33436b">31</text></svg>
    <span style="width:116px;padding-left:20px">25.09.2024</span>
    <span class="vs"></span>
    <span style="width:148px;padding-left:34px">00:00:00:003</span>
    <span class="vs"></span>
    <span class="me-auto" style="padding-left:13px">17:00</span>
    <span class="vs me-3"></span>
    <svg width="14" height="14" viewBox="0 0 14 14" stroke="#777"><path d="M10 2h4M12 0v4M10 7h4M12 5v4M10 12h4M12 10v4M5 7h4M7 5v4M5 12h4M7 10v4M0 12h4M2 10v4"/></svg>
  </footer>
</div>

<script src="https://cdn.jsdelivr.net/npm/bootstrap@5.3.0/dist/js/bootstrap.bundle.min.js"></script>
<script>
const icon = (id, w, h) => `<svg width="${w}" height="${h}"><use href="#${id}"/></svg>`;
const hours = (from, to) => Array.from({length: to - from + 1}, (_, i) => `${from + i}:00`);

// Each room lists its days; "b" marks the booked slot shown before the free slot of the same hour.
const rooms = [
  {name: '1. Kanner Trampolin', b: {hour: '12:00', label: 'Kanner Trampolin', icon: icon('tramp', 22, 18)}},
  {name: '2. Roller Skate Beräich', b: {hour: '15:00', label: 'Roller', icon: icon('skate', 20, 20)}}
];
const day = (date, name, now) => `<tr class="day ${now}"><td class="tog"><button class="plain w-100" aria-label="Toggle day">${icon('more', 17, 17)}</button></td><td colspan="3">${date}</td><td>${name}</td></tr>`;
const slot = h => `<tr><td></td><td></td><td>${h}</td><td></td><td></td></tr>`;
const booked = b => `<tr class="booked"><td></td><td><div class="d-flex justify-content-center ps-2">${b.icon}</div></td><td class="hit">${b.hour}</td><td class="hit">0/1</td><td class="hit">${b.label}</td></tr>`;

document.getElementById('work').innerHTML = rooms.map(r => `
<section class="frame">
  <div class="d-flex">
    <div class="view flex-grow-1">
      <table class="sched">
        <colgroup><col style="width:33px"><col style="width:90px"><col style="width:50px"><col style="width:50px"><col></colgroup>
        <thead>
          <tr><th colspan="5" class="wide">${r.name}</th></tr>
          <tr><th colspan="2"><div class="d-flex align-items-center justify-content-end pe-2">Datum<span class="sort ps-3 pe-1">${icon('up', 10, 6)}</span></div></th><th>Zäit</th><th>Leit</th><th class="wide">Rekord</th></tr>
        </thead>
        <tbody>
          ${day('25.09.2024', 'Mëttwoch', 'now')}
          ${hours(10, 20).map(h => (h === r.b.hour ? booked(r.b) : '') + slot(h)).join('')}
          ${day('26.09.2024', 'Donneschdeg', '')}
          ${hours(10, 20).map(slot).join('')}
        </tbody>
      </table>
    </div>
    <div class="vbar d-flex flex-column align-items-center gap-2">${icon('up', 7, 5)}<i class="flex-grow-1"></i>${icon('down', 7, 5)}</div>
  </div>
  <div class="hbar d-flex align-items-center gap-2">${icon('left', 5, 8)}<i></i><span class="ms-auto">${icon('right', 5, 8)}</span></div>
</section>`).join('');
</script>
</body>
</html>
